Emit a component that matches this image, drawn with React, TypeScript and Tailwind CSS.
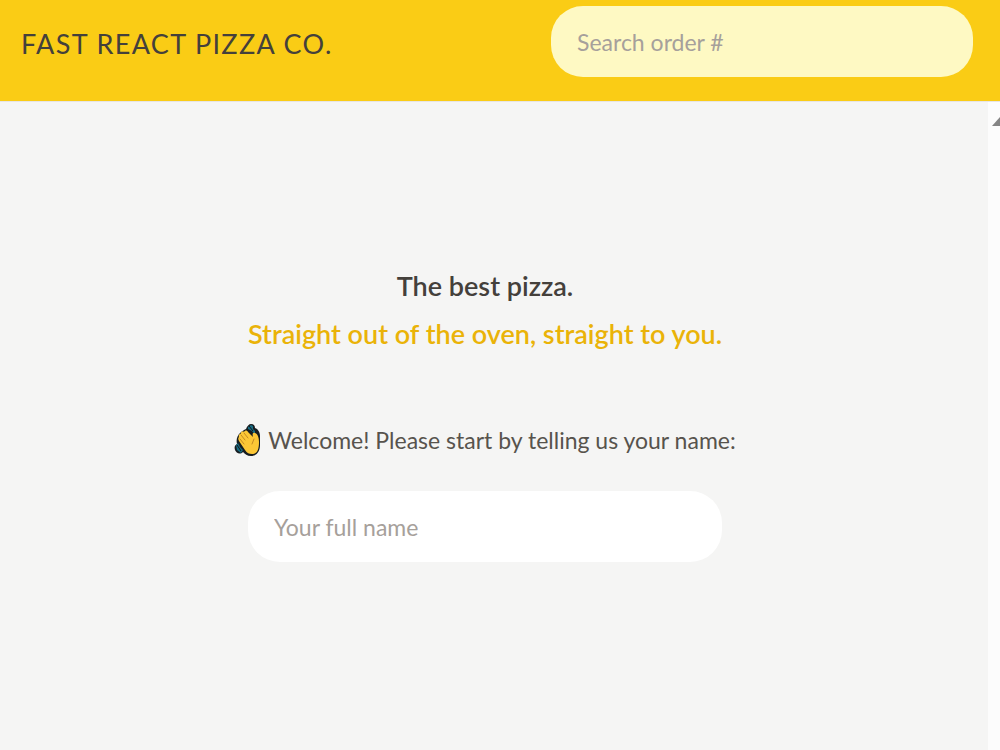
import React, { useState } from 'react';

// Header Component
const Header = () => {
  const [query, setQuery] = useState('');

  return (
    <header className="flex items-start justify-between gap-6 border-b border-stone-200 bg-[#facc15] pt-1.5 pr-[27px] pb-5 pl-[21px]">
      <a href="#" className="text-[27px] leading-[75px] font-normal uppercase tracking-wider whitespace-nowrap text-stone-700">
        Fast React Pizza Co.
      </a>
      <form className="w-[422px]" onSubmit={(e) => e.preventDefault()}>
        <input
          type="text"
          aria-label="Search order number"
          placeholder="Search order #"
          value={query}
          onChange={(e) => setQuery(e.target.value)}
          className="block h-[71px] w-full rounded-[32px] bg-[#fef9c3] px-[26px] text-[23px] text-stone-700 outline-none placeholder:text-stone-400"
        />
      </form>
    </header>
  );
};

// Waving hand
const WaveIcon = () => (
  <svg viewBox="0 0 28 34" className="h-[34px] w-7 shrink-0" aria-hidden="true">
    <path d="M12 6C13 3 15 1 17 1c3 0 4 2 4 4 3 1 5 4 5 8v9c0 6-3 11-9 11-4 0-6-2-8-4-3 3-7 1-8-2-1-3 0-5 2-6-1-4 0-8 3-11 2-2 4-3 6-4z" fill="#171d20" />
    <path d="M14 4l3-2 2 1v3l2 2v4l-3-4-4-2zM2 22l2-2 2 4 3 3-2 3-4-3z" fill="#176b82" />
    <path d="M15 3l4 5M3 22l4 6" stroke="#101719" strokeWidth="1" />
    <path d="M5 14c-1-2 1-4 2-3-1-2 2-4 3-2 1-2 3-2 4 0l5 5c-1-3 0-5 2-4 3 1 4 5 4 9 0 8-2 12-7 12-3 0-5-1-7-4l-6-9c-1-2-1-3 0-4z" fill="#fcc736" />
    <path d="M7 12l4 5M10 10l4 5M6 16l4 5M20 16l-2 5" fill="none" stroke="#c58a22" strokeWidth="1" strokeLinecap="round" />
  </svg>
);

// Home Component
const Home = () => {
  const [username, setUsername] = useState('');

  return (
    <main className="flex flex-1 flex-col items-center bg-[#f5f5f4] pt-40 pr-[18px] text-center">
      <h1 className="mb-16 text-[27px] leading-[48px] font-semibold text-stone-700">
        The best pizza.
        <br />
        <span className="text-[#eab308]">Straight out of the oven, straight to you.</span>
      </h1>
      <form className="flex flex-col items-center" onSubmit={(e) => e.preventDefault()}>
        <label htmlFor="username" className="mb-[33px] flex items-center gap-1.5 text-[23px] leading-9 text-stone-600">
          <WaveIcon />
          Welcome! Please start by telling us your name:
        </label>
        <input
          id="username"
          type="text"
          placeholder="Your full name"
          value={username}
          onChange={(e) => setUsername(e.target.value)}
          className="h-[71px] w-[474px] max-w-full rounded-[32px] bg-white px-[26px] text-[23px] text-stone-700 outline-none placeholder:text-stone-400"
        />
      </form>
    </main>
  );
};

// Scroll track at the right edge
const ScrollTrack = () => (
  <div className="flex w-3 justify-end overflow-hidden bg-[#fcfcfc] pt-3.5">
    <svg viewBox="0 0 8 12" className="h-3 w-2" aria-hidden="true">
      <path d="M0 10L8 1v9z" fill="#858585" />
    </svg>
  </div>
);

const App = () => (
  <div className="flex min-h-screen flex-col font-['Lato','Open_Sans',sans-serif]">
    <Header />
    <div className="flex flex-1">
      <Home />
      <ScrollTrack />
    </div>
  </div>
);

export default App;
